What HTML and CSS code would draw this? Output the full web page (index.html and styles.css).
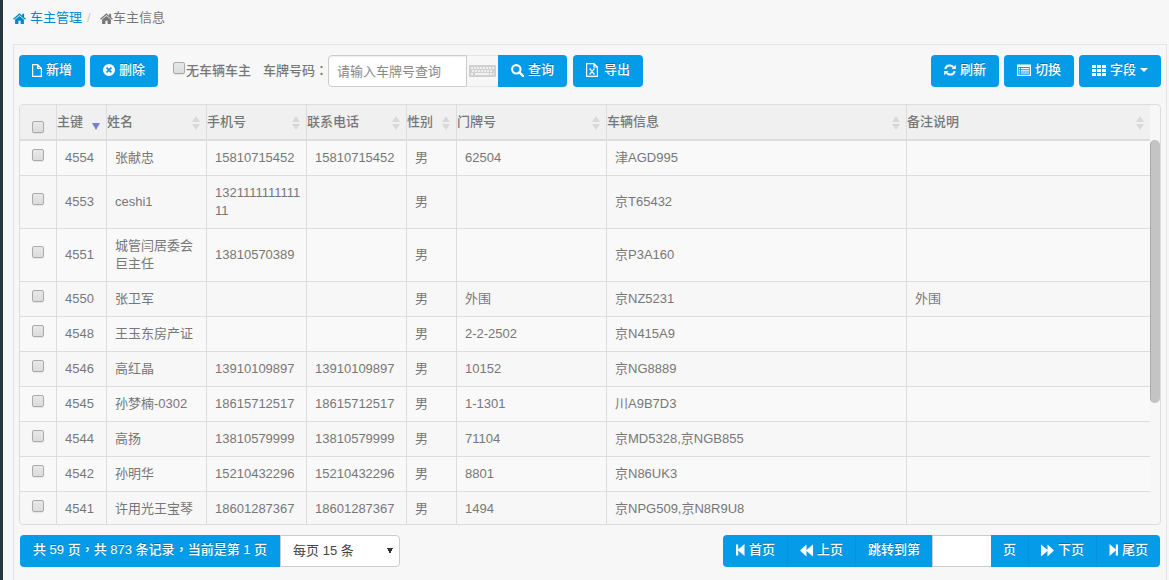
FILE: index.html
```html
<!DOCTYPE html>
<html lang="zh-CN">
<head>
<meta charset="utf-8">
<title>车主信息</title>
<link rel="stylesheet" href="styles.css">
</head>
<body>
<svg class="defs" aria-hidden="true">
  <symbol id="home" viewBox="0 0 14 12"><path d="M7 .4 0 6.4l.9 1L7 2.3l6.100 5.100.9-1-2-1.700V.8H10v2.200zM7 3.200 2.200 7.200V12H5.800V8.400h2.400V12h3.600V7.200z"/></symbol>
  <symbol id="file" viewBox="0 0 10 13"><path d="M.6.6h5l3.800 3.800v8H.6zM5.600.6v3.800h3.800" fill="none" stroke="currentColor" stroke-width="1.200"/></symbol>
  <symbol id="remove" viewBox="0 0 12 12"><path fill-rule="evenodd" d="M6 0a6 6 0 1 0 0 12A6 6 0 0 0 6 0zM4.200 2.900 6 4.700l1.800-1.800 1.300 1.300L7.300 6l1.800 1.800-1.300 1.300L6 7.300 4.200 9.100 2.900 7.800 4.700 6 2.900 4.200z"/></symbol>
  <symbol id="search" viewBox="0 0 13 13"><circle cx="5.300" cy="5.300" r="4.200" fill="none" stroke="currentColor" stroke-width="2.100"/><path d="m8.500 8.500 3.400 3.400" stroke="currentColor" stroke-width="2.400" stroke-linecap="round"/></symbol>
  <symbol id="excel" viewBox="0 0 14 14"><path d="M.6.6h7.400l3.400 3.400v9.400H.6zM8 .6V4h3.400M3.200 6h2M7 6h2M3.200 11h2M7 11h2M4 6l4 5M8 6l-4 5" fill="none" stroke="currentColor" stroke-width="1.200"/></symbol>
  <symbol id="refresh" viewBox="0 0 13 12"><path d="M1.400 5A5 5 0 0 1 10 2.700M11.600 7A5 5 0 0 1 3 9.300" fill="none" stroke="currentColor" stroke-width="2.200"/><path d="M12.800.4V5H8.200zM.2 11.600V7h4.600z"/></symbol>
  <symbol id="listalt" viewBox="0 0 14 12"><path d="M.6 1.600h12.800v9.800H.6z" fill="none" stroke="currentColor" stroke-width="1.200"/><path d="M0 .5h14V3H0zM2 4h1.200v1.200H2zm2 0h8v1.200H4zM2 6.200h1.200v1.200H2zm2 0h8v1.200H4zM2 8.400h1.200v1.200H2zm2 0h8v1.200H4z"/></symbol>
  <symbol id="grid" viewBox="0 0 14 12"><path d="M0 1h4v3H0zm5 0h4v3H5zm5 0h4v3h-4zM0 5h4v3H0zm5 0h4v3H5zm5 0h4v3h-4zM0 9h4v3H0zm5 0h4v3H5zm5 0h4v3h-4z"/></symbol>
  <symbol id="first" viewBox="0 0 9 12"><path d="M0 .5h2.200v5L8.500 0v12L2.200 6.500v5H0z"/></symbol>
  <symbol id="prev" viewBox="0 0 13 12"><path d="M0 6 6.500 0v5.500L13 0v12L6.500 6.500V12z"/></symbol>
  <symbol id="next" viewBox="0 0 13 12"><path d="M13 6 6.500 0v5.500L0 0v12l6.500-5.500V12z"/></symbol>
  <symbol id="last" viewBox="0 0 9 12"><path d="M9 .5H6.800v5L.5 0v12l6.300-5.500v5H9z"/></symbol>
  <symbol id="keyboard" viewBox="0 0 27 12"><path fill="#d0d0d0" d="M1 0h25a1 1 0 0 1 1 1v10a1 1 0 0 1-1 1H1a1 1 0 0 1-1-1V1a1 1 0 0 1 1-1z"/><path d="M2 3h23M3 6h21M2 9h3M21 9h4" stroke="#fafafa" stroke-width="1.600" stroke-dasharray="2 1" fill="none"/><path d="M6 9h14" stroke="#fafafa" stroke-width="1.600"/></symbol>
</svg>
<div class="sidebar-edge"></div>
<main class="page">
  <nav class="breadcrumb">
    <a href="#"><svg class="i-home"><use href="#home"/></svg> 车主管理</a>
    <span class="slash">/</span>
    <span class="current"><svg class="i-home"><use href="#home"/></svg>车主信息</span>
  </nav>
  <section class="panel">
    <div class="toolbar">
      <button class="btn"><svg class="i-file"><use href="#file"/></svg>新增</button>
      <button class="btn"><svg class="i-12"><use href="#remove"/></svg>删除</button>
      <label class="check-label"><input type="checkbox" class="check">无车辆车主</label>
      <div class="search">
        <label for="plate">车牌号码<span class="mid" lang="zh-TW">：</span></label>
        <input id="plate" class="plate" type="text" placeholder="请输入车牌号查询">
        <span class="addon"><svg class="i-kb"><use href="#keyboard"/></svg></span>
        <button class="btn btn-end"><svg class="i-13"><use href="#search"/></svg>查询</button>
      </div>
      <button class="btn"><svg class="i-14"><use href="#excel"/></svg>导出</button>
      <div class="tools">
        <button class="btn"><svg class="i-12"><use href="#refresh"/></svg>刷新</button>
        <button class="btn"><svg class="i-wide"><use href="#listalt"/></svg>切换</button>
        <button class="btn"><svg class="i-wide"><use href="#grid"/></svg>字段<span class="caret"></span></button>
      </div>
    </div>
    <div class="grid">
      <table>
        <colgroup><col class="c-check"><col class="c-50"><col class="c-100"><col class="c-100"><col class="c-100"><col class="c-50"><col class="c-150"><col class="c-300"><col></colgroup>
        <thead>
          <tr>
            <th><input type="checkbox" class="check" aria-label="全选"></th>
            <th><div class="head">主键<span class="sort desc"></span></div></th>
            <th><div class="head">姓名<span class="sort"></span></div></th>
            <th><div class="head">手机号<span class="sort"></span></div></th>
            <th><div class="head">联系电话<span class="sort"></span></div></th>
            <th><div class="head">性别<span class="sort"></span></div></th>
            <th><div class="head">门牌号<span class="sort"></span></div></th>
            <th><div class="head">车辆信息<span class="sort"></span></div></th>
            <th><div class="head">备注说明<span class="sort"></span></div></th>
          </tr>
        </thead>
        <tbody>
          <tr><td><input type="checkbox" class="check" aria-label="4554"></td><td>4554</td><td>张献忠</td><td>15810715452</td><td>15810715452</td><td>男</td><td>62504</td><td>津AGD995</td><td></td></tr>
          <tr><td><input type="checkbox" class="check" aria-label="4553"></td><td>4553</td><td>ceshi1</td><td>1321111111111<wbr>11</td><td></td><td>男</td><td></td><td>京T65432</td><td></td></tr>
          <tr><td><input type="checkbox" class="check" aria-label="4551"></td><td>4551</td><td>城管闫居委会巨主任</td><td>13810570389</td><td></td><td>男</td><td></td><td>京P3A160</td><td></td></tr>
          <tr><td><input type="checkbox" class="check" aria-label="4550"></td><td>4550</td><td>张卫军</td><td></td><td></td><td>男</td><td>外围</td><td>京NZ5231</td><td>外围</td></tr>
          <tr><td><input type="checkbox" class="check" aria-label="4548"></td><td>4548</td><td>王玉东房产证</td><td></td><td></td><td>男</td><td>2-2-2502</td><td>京N415A9</td><td></td></tr>
          <tr><td><input type="checkbox" class="check" aria-label="4546"></td><td>4546</td><td>高红晶</td><td>13910109897</td><td>13910109897</td><td>男</td><td>10152</td><td>京NG8889</td><td></td></tr>
          <tr><td><input type="checkbox" class="check" aria-label="4545"></td><td>4545</td><td>孙梦楠-0302</td><td>18615712517</td><td>18615712517</td><td>男</td><td>1-1301</td><td>川A9B7D3</td><td></td></tr>
          <tr><td><input type="checkbox" class="check" aria-label="4544"></td><td>4544</td><td>高扬</td><td>13810579999</td><td>13810579999</td><td>男</td><td>71104</td><td>京MD5328,京NGB855</td><td></td></tr>
          <tr><td><input type="checkbox" class="check" aria-label="4542"></td><td>4542</td><td>孙明华</td><td>15210432296</td><td>15210432296</td><td>男</td><td>8801</td><td>京N86UK3</td><td></td></tr>
          <tr><td><input type="checkbox" class="check" aria-label="4541"></td><td>4541</td><td>许用光王宝琴</td><td>18601287367</td><td>18601287367</td><td>男</td><td>1494</td><td>京NPG509,京N8R9U8</td><td></td></tr>
        </tbody>
      </table>
      <div class="track"><div class="thumb"></div></div>
    </div>
    <div class="pager">
      <div class="group">
        <span class="btn info">共 59 页<span class="mid" lang="zh-TW">，</span>共 873 条记录<span class="mid" lang="zh-TW">，</span>当前是第 1 页</span>
        <select class="size" aria-label="每页条数"><option>每页 15 条</option></select>
      </div>
      <div class="group">
        <button class="btn"><svg class="i-9"><use href="#first"/></svg>首页</button>
        <button class="btn"><svg class="i-13"><use href="#prev"/></svg>上页</button>
        <label class="btn" for="jump">跳转到第</label>
        <input id="jump" class="jump" type="text">
        <label class="btn" for="jump">页</label>
        <button class="btn"><svg class="i-13"><use href="#next"/></svg>下页</button>
        <button class="btn"><svg class="i-9"><use href="#last"/></svg>尾页</button>
      </div>
    </div>
  </section>
</main>
</body>
</html>
```

FILE: styles.css
```css
* { box-sizing: border-box; }

body {
  margin: 0;
  min-height: 100vh;
  display: flex;
  background: #f7f7f7;
  color: #777;
  font: 13px/18px "Liberation Sans", "Noto Sans CJK SC", sans-serif;
}

button, input, select { margin: 0; font: inherit; }
svg { flex: none; fill: currentColor; overflow: visible; }
.defs { display: none; }
.mid { font-family: "Noto Sans CJK TC", sans-serif; line-height: 1; }

.i-home { width: 13px; height: 11px; }
.i-file { width: 10px; height: 13px; }
.i-12 { width: 12px; height: 12px; }
.i-13 { width: 13px; height: 13px; }
.i-14 { width: 14px; height: 14px; }
.i-wide { width: 14px; height: 12px; }
.i-9 { width: 9px; height: 12px; }
.i-kb { width: 27px; height: 12px; }

.sidebar-edge { width: 3px; background: #293541; }

.page {
  flex: 1;
  min-width: 0;
  display: flex;
  flex-direction: column;
  padding: 9px 2px 0 10px;
}

.breadcrumb { display: flex; margin-bottom: 17px; }
.breadcrumb a, .current { display: flex; align-items: center; }
.breadcrumb a { gap: 4px; color: #0088cc; text-decoration: none; }
.slash { width: 18px; padding-left: 5px; color: #ccc; }

.panel {
  flex: 1;
  padding: 10px 5px 0;
  border: 1px solid #e5e5e5;
  border-bottom: 0;
}

.toolbar { display: flex; align-items: center; gap: 5px; margin-bottom: 17px; }

.btn {
  display: flex;
  align-items: center;
  gap: 4px;
  height: 32px;
  padding: 0 13px 2px;
  border: 0;
  border-radius: 4px;
  background: #049be8;
  color: #fff;
  font-weight: 500;
  text-shadow: 0 -1px 0 rgba(0, 0, 0, .25);
  white-space: nowrap;
}

.check {
  appearance: none;
  flex: none;
  width: 12px;
  height: 12px;
  border: 1px solid #aaa;
  border-radius: 2px;
  background: linear-gradient(#e8e8e8, #dcdcdc);
  box-shadow: 0 1px 1px rgba(0, 0, 0, .08);
}

.check-label { display: flex; gap: 1px; margin: 0 7px 0 10px; font-weight: 500; }

.search { display: flex; align-items: center; }
.search label { font-weight: 500; }

.plate {
  width: 139px;
  height: 32px;
  padding: 0 8px;
  border: 1px solid #ccc;
  border-radius: 4px 0 0 4px;
  background: #fff;
  box-shadow: inset 0 1px 1px rgba(0, 0, 0, .075);
}
.plate::placeholder { color: #888; }

.addon {
  display: flex;
  align-items: center;
  justify-content: center;
  width: 31px;
  height: 32px;
  border: solid #e5e5e5;
  border-width: 1px 0;
}
.btn-end { margin-right: 1px; border-radius: 0 4px 4px 0; }

.tools { display: flex; gap: 5px; margin-left: auto; }

.caret {
  border: 4px solid transparent;
  border-top-color: #fff;
  border-bottom: 0;
}

.grid {
  display: flex;
  align-items: flex-start;
  max-height: 421px;
  margin-bottom: 10px;
  border: 1px solid #ddd;
  border-radius: 4px;
  overflow: hidden;
}

table {
  flex: 1;
  width: 100%;
  min-width: 0;
  table-layout: fixed;
  border-collapse: separate;
  border-spacing: 0;
}
.c-check { width: 36px; }
.c-50 { width: 50px; }
.c-100 { width: 100px; }
.c-150 { width: 150px; }
.c-300 { width: 300px; }

th, td { border-left: 1px solid #ddd; text-align: left; }
th:first-child, td:first-child { border-left: 0; padding-left: 12px; }

th {
  height: 36px;
  padding: 0;
  border-bottom: 2px solid #ddd;
  background: #f0f0f0;
  font-weight: 500;
}
th .check { display: block; margin-top: 10px; }
.head { display: flex; justify-content: space-between; padding-right: 6px; }

.sort {
  display: flex;
  flex-direction: column;
  justify-content: center;
  gap: 2px;
  padding-top: 2px;
}
.sort::before, .sort::after { content: ""; border: 4px solid transparent; }
.sort::before { border-top: 0; border-bottom: 6px solid #d9d9d9; }
.sort::after { border-bottom: 0; border-top: 6px solid #d9d9d9; }
.desc { padding-top: 8px; }
.desc::before { display: none; }
.desc::after { border-top: 7px solid #7b7bdf; }

td { padding: 8px; border-bottom: 1px solid #ddd; }
td .check { display: block; margin-bottom: 6px; }
tbody tr:nth-child(odd) { background: #f9f9f9; }

.track { flex: none; width: 10px; padding-top: 35px; }
.thumb {
  height: 263px;
  border-left: 1px solid #aaa;
  border-radius: 5px;
  background: #c4c4c4;
}

.pager { display: flex; justify-content: space-between; padding: 0 1px; }
.group { display: flex; }
.group .btn { padding: 0 12px 2px; border-radius: 0; }
.group .btn:first-child { padding-left: 13px; border-radius: 4px 0 0 4px; }
.group .btn:last-child { border-radius: 0 4px 4px 0; }
.group .btn + .btn { border-left: 1px solid #0493dc; }
.group .info { display: block; padding: 6px 13px 8px; }

.size {
  appearance: none;
  width: 120px;
  height: 32px;
  padding: 0 12px;
  border: 1px solid #ccc;
  border-radius: 0 4px 4px 0;
  background: #fff;
  background-image: linear-gradient(to bottom right, #333 50%, transparent 51%), linear-gradient(to bottom left, #333 50%, transparent 51%);
  background-size: 3px 6px;
  background-position: right 6px center, right 9px center;
  background-repeat: no-repeat;
  color: #444;
}

.jump {
  width: 59px;
  height: 32px;
  border: 1px solid #ccc;
  border-right: 0;
  background: #fff;
}
```
